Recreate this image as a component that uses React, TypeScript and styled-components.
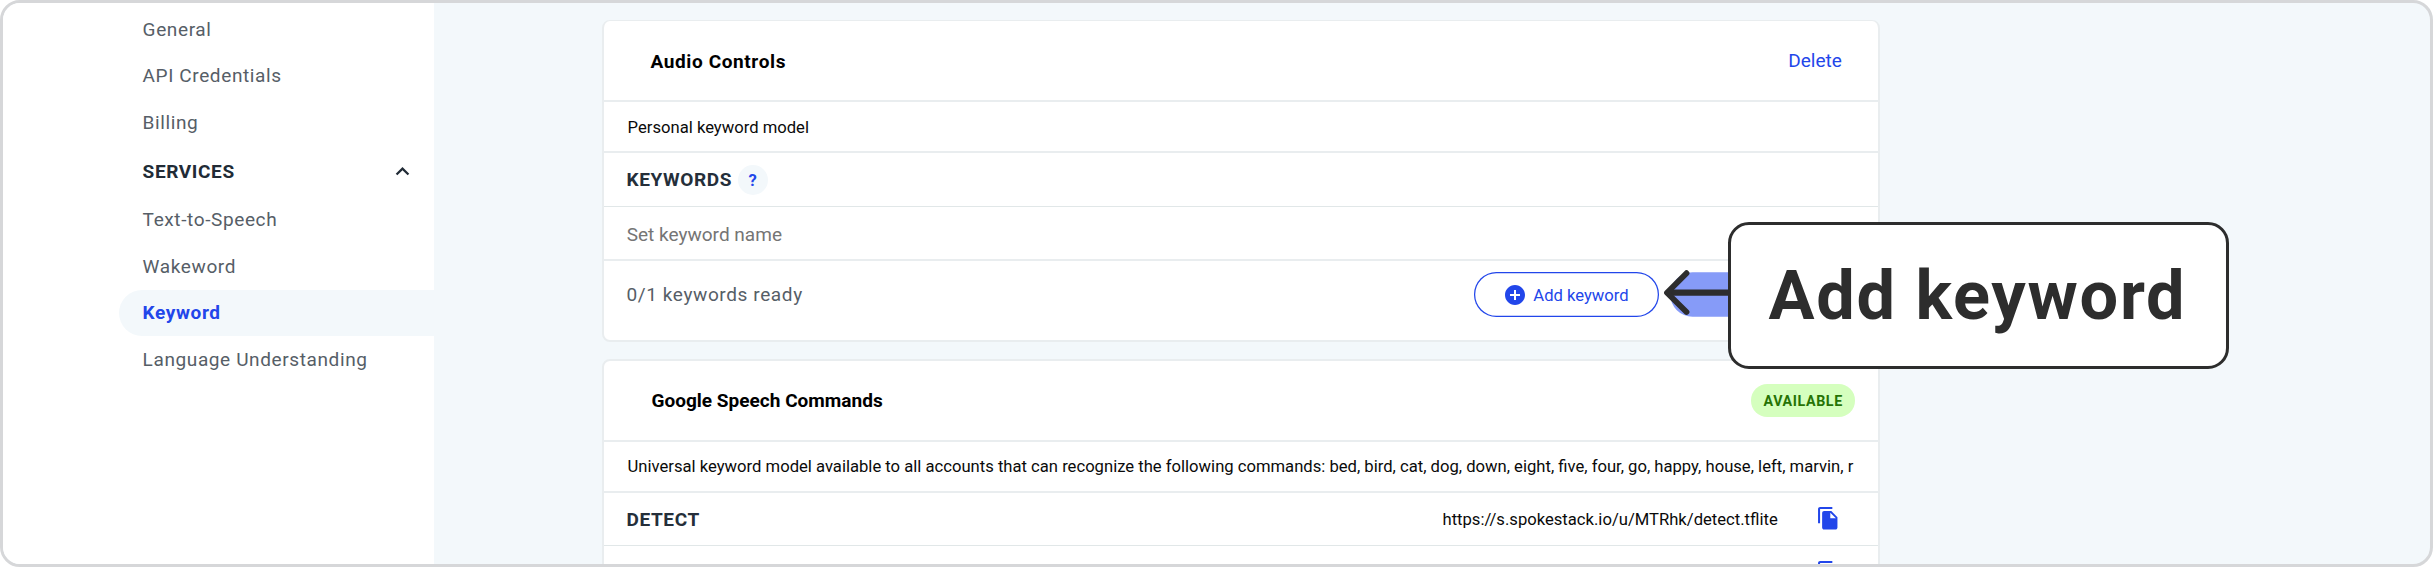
import React from 'react';
import styled, { createGlobalStyle } from 'styled-components';

const BLUE = '#2246ea';
const INK = '#2d2d2d';
const MIST = '#f3f8fb';
const LINE = '#e9edef';

const GlobalStyle = createGlobalStyle`
  * { box-sizing: border-box; }
  body { margin: 0; background: #fff; font-family: Roboto, "Liberation Sans", sans-serif; }
  p, h3 { margin: 0; }
`;

const Frame = styled.div`
  position: relative;
  display: flex;
  width: 2433px;
  height: 567px;
  border: 3px solid #d6d7d9;
  border-radius: 20px;
  background: ${MIST};
  overflow: hidden;
`;

const Sidebar = styled.nav`
  flex: none;
  display: flex;
  flex-direction: column;
  width: 431px;
  padding: 3.4px 0 0 115.6px;
  background: #fff;
`;

const NavItem = styled.a<{ $active?: boolean }>`
  flex: none;
  display: flex;
  align-items: center;
  height: 46.4px;
  padding-left: 24px;
  border-radius: 23.2px 0 0 23.2px;
  font-size: 19.04px;
  letter-spacing: 0.6px;
  font-weight: ${(p) => (p.$active ? 700 : 400)};
  color: ${(p) => (p.$active ? BLUE : '#565e67')};
  background: ${(p) => (p.$active ? MIST : 'transparent')};
`;

const NavHeading = styled.div`
  flex: none;
  display: flex;
  align-items: center;
  justify-content: space-between;
  height: 51.2px;
  padding: 0 18px 0 24px;
  font-size: 19.04px;
  font-weight: 700;
  letter-spacing: 0.6px;
  color: #212b36;
`;

const Main = styled.main`
  display: flex;
  flex-direction: column;
  gap: 17px;
  width: 1446px;
  padding: 17px 0 0 168px;
`;

const Card = styled.section<{ $top: number }>`
  flex: none;
  width: 1278px;
  border: 2px solid ${LINE};
  border-top-width: ${(p) => p.$top}px;
  border-radius: 8px;
  background: #fff;
`;

const Row = styled.div<{ $h: number; $line?: number; $drop?: number }>`
  display: flex;
  align-items: center;
  height: ${(p) => p.$h + (p.$line ?? 0)}px;
  padding: ${(p) => p.$drop ?? 0}px 23.5px 0 22.5px;
  border-bottom: ${(p) => p.$line ?? 0}px solid ${(p) => (p.$line === 1 ? '#e1e7e8' : LINE)};
  font-size: 19.04px;
`;

const Title = styled.h3<{ $spaced?: boolean }>`
  flex: 1;
  padding: ${(p) => (p.$spaced ? '2.4px 0 0 24px' : '0 0 0 25px')};
  font-size: 19.04px;
  font-weight: 700;
  letter-spacing: ${(p) => (p.$spaced ? 0.6 : 0)}px;
  color: #000;
`;

const DeleteLink = styled.a`
  margin-right: 12.7px;
  color: ${BLUE};
`;

const Description = styled.p`
  padding-left: 1.1px;
  font-size: 16.64px;
  white-space: nowrap;
  color: #0a0a0a;
`;

const Label = styled.span`
  font-weight: 700;
  letter-spacing: 0.6px;
  color: #252f3a;
`;

const Help = styled.span`
  display: flex;
  align-items: center;
  justify-content: center;
  width: 30px;
  height: 30px;
  margin-left: 5.5px;
  padding-top: 1px;
  border-radius: 50%;
  background: ${MIST};
  color: ${BLUE};
  font-size: 16.64px;
  font-weight: 700;
`;

const Placeholder = styled.span`
  padding: 2.4px 0 0 0.2px;
  color: #757575;
`;

const Footer = styled.div`
  display: flex;
  align-items: flex-start;
  justify-content: space-between;
  height: 79px;
  padding: 11.4px 219.3px 0 22.4px;
`;

const Status = styled.span`
  padding-top: 1px;
  line-height: 44.5px;
  font-size: 19.04px;
  letter-spacing: 0.6px;
  color: #565e67;
`;

const AddButton = styled.div`
  display: flex;
  align-items: center;
  width: 184.5px;
  height: 44.5px;
  padding-left: 28.7px;
  border-radius: 22.3px;
  box-shadow: inset 0 0 0 1.25px ${BLUE};
  color: ${BLUE};
  font-size: 16.64px;
`;

const AddLabel = styled.span`
  padding: 1.2px 0 0 6.4px;
`;

const Badge = styled.span`
  display: flex;
  align-items: center;
  height: 32.6px;
  padding: 0 11.7px 0 12.2px;
  border-radius: 16.3px;
  background: #d5ffbe;
  color: #267305;
  font-size: 14.28px;
  font-weight: 700;
  letter-spacing: 0.6px;
`;

const Url = styled.span`
  margin-left: auto;
  font-size: 16.64px;
  color: #0a0a0a;
`;

const CopyButton = styled.span`
  display: flex;
  margin: 0 13.7px 1px 38.5px;
`;

const RightOnly = styled.span`
  margin-left: auto;
`;

const Annotation = styled.div`
  position: absolute;
  left: 1659px;
  top: 219px;
  display: flex;
  align-items: center;
`;

const Callout = styled.div`
  display: flex;
  align-items: center;
  width: 501px;
  height: 147px;
  padding-left: 38px;
  border: 3px solid ${INK};
  border-radius: 21px;
  background: #fff;
  color: ${INK};
  font-size: 68.5px;
  font-weight: 700;
  letter-spacing: 1.7px;
  white-space: nowrap;
`;

const ChevronUp = () => (
  <svg width="27" height="27" viewBox="0 0 24 24" fill="#212b36">
    <path d="M12 8l-6 6 1.41 1.41L12 10.83l4.59 4.58L18 14z" />
  </svg>
);

const PlusCircle = () => (
  <svg width="24" height="24" viewBox="0 0 24 24" fill={BLUE}>
    <path d="M12 2C6.48 2 2 6.48 2 12s4.48 10 10 10 10-4.48 10-10S17.52 2 12 2zm5 11h-4v4h-2v-4H7v-2h4V7h2v4h4v2z" />
  </svg>
);

const Copy = () => (
  <svg width="24.5" height="24.5" viewBox="0 0 24 24" fill={BLUE}>
    <path d="M16 1H4c-1.1 0-2 .9-2 2v14h2V3h12V1zm-1 4l6 6v10c0 1.1-.9 2-2 2H7.99C6.89 23 6 22.1 6 21l.01-14c0-1.1.89-2 1.99-2h7zm-1 7h5.5L14 6.5V12z" />
  </svg>
);

const Arrow = () => (
  <svg width="65.5" height="147" viewBox="0 0 65.5 147">
    <path d="M66 50.3H30.5a22.2 22.2 0 0 0 0 44.4H66z" fill="#869bf8" />
    <path d="M66 70.7H5" stroke={INK} strokeWidth="6.2" fill="none" />
    <path d="M24.5 51.2L5 70.7l19.5 19.3" stroke={INK} strokeWidth="5.8" strokeLinecap="round" strokeLinejoin="round" fill="none" />
  </svg>
);

export default function App() {
  return (
    <>
      <GlobalStyle />
      <Frame>
        <Sidebar>
          <NavItem>General</NavItem>
          <NavItem>API Credentials</NavItem>
          <NavItem>Billing</NavItem>
          <NavHeading>
            SERVICES
            <ChevronUp />
          </NavHeading>
          <NavItem>Text-to-Speech</NavItem>
          <NavItem>Wakeword</NavItem>
          <NavItem $active>Keyword</NavItem>
          <NavItem>Language Understanding</NavItem>
        </Sidebar>
        <Main>
          <Card $top={1}>
            <Row $h={79} $line={2}>
              <Title $spaced>Audio Controls</Title>
              <DeleteLink>Delete</DeleteLink>
            </Row>
            <Row $h={49} $line={2} $drop={1}>
              <Description>Personal keyword model</Description>
            </Row>
            <Row $h={53} $line={1}>
              <Label>KEYWORDS</Label>
              <Help>?</Help>
            </Row>
            <Row $h={52} $line={2}>
              <Placeholder>Set keyword name</Placeholder>
            </Row>
            <Footer>
              <Status>0/1 keywords ready</Status>
              <AddButton>
                <PlusCircle />
                <AddLabel>Add keyword</AddLabel>
              </AddButton>
            </Footer>
          </Card>
          <Card $top={2}>
            <Row $h={79} $line={2}>
              <Title>Google Speech Commands</Title>
              <Badge>AVAILABLE</Badge>
            </Row>
            <Row $h={49} $line={2}>
              <Description>
                Universal keyword model available to all accounts that can recognize the following
                commands: bed, bird, cat, dog, down, eight, five, four, go, happy, house, left,
                marvin, r
              </Description>
            </Row>
            <Row $h={52} $line={1}>
              <Label>DETECT</Label>
              <Url>https://s.spokestack.io/u/MTRhk/detect.tflite</Url>
              <CopyButton>
                <Copy />
              </CopyButton>
            </Row>
            <Row $h={53}>
              <RightOnly>
                <CopyButton>
                  <Copy />
                </CopyButton>
              </RightOnly>
            </Row>
          </Card>
        </Main>
        <Annotation>
          <Arrow />
          <Callout>Add keyword</Callout>
        </Annotation>
      </Frame>
    </>
  );
}
